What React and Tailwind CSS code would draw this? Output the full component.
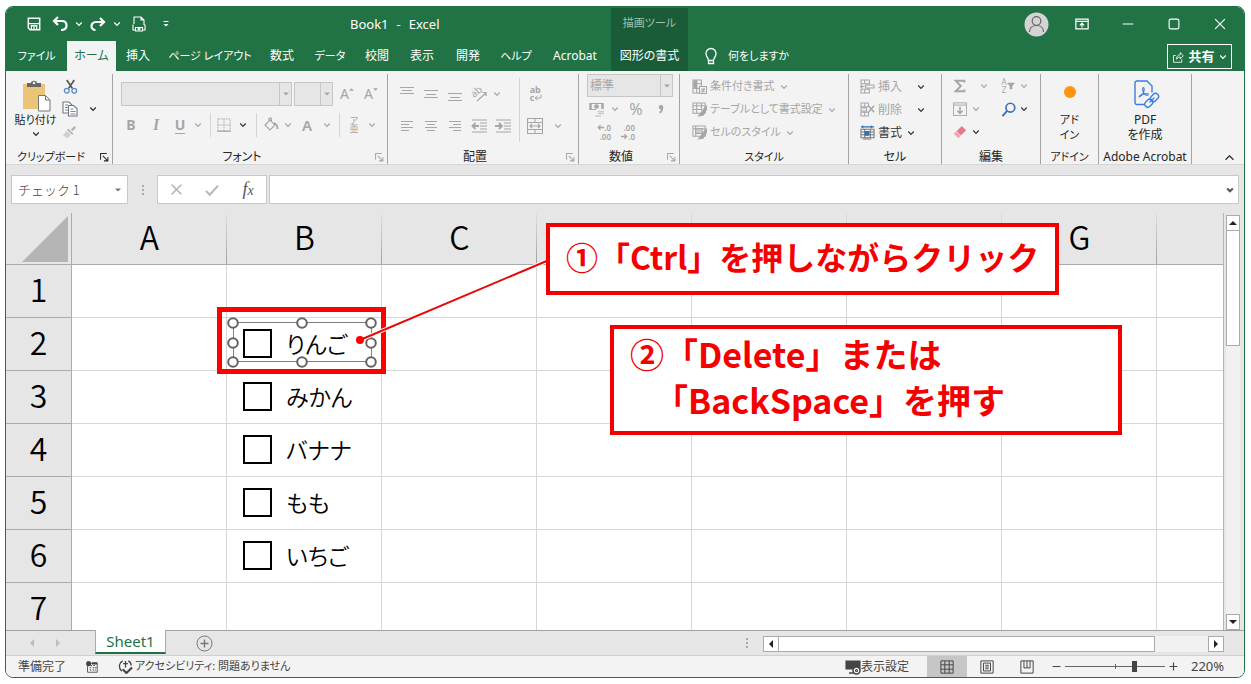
import { useState } from 'react';
import clsx from 'clsx';

const TABS = [
  { name: 'ファイル', width: 'w-[61px]', small: true },
  { name: 'ホーム', width: 'w-[49px]', active: true },
  { name: '挿入', width: 'w-11' },
  { name: 'ページ レイアウト', width: 'w-[100px]', small: true },
  { name: '数式', width: 'w-11' },
  { name: 'データ', width: 'w-[52px]', small: true },
  { name: '校閲', width: 'w-[42px]' },
  { name: '表示', width: 'w-12' },
  { name: '開発', width: 'w-11' },
  { name: 'ヘルプ', width: 'w-[52px]', small: true },
  { name: 'Acrobat', width: 'w-[66px]' },
];

// columns D-F have no title, the first callout lies over them
const COLUMNS = [
  { id: 'A', title: 'A' },
  { id: 'B', title: 'B' },
  { id: 'C', title: 'C' },
  { id: 'D' },
  { id: 'E' },
  { id: 'F' },
  { id: 'G', title: 'G' },
];
const ROWS = [1, 2, 3, 4, 5, 6, 7];
const ITEMS = { 2: 'りんご', 3: 'みかん', 4: 'バナナ', 5: 'もも', 6: 'いちご' };

export default function App() {
  return (
    <div className="h-screen bg-white py-1.5 pr-1.5 pl-[5px] font-['Noto_Sans','Noto_Sans_CJK_JP',sans-serif] text-xs text-[#262626]">
      <div className="flex h-full flex-col overflow-hidden rounded-lg border border-[#217346] bg-[#e6e6e6] [font-feature-settings:'palt']">
        <TitleBar />
        <TabBar />
        <Ribbon />
        <FormulaBar />
        <main className="flex min-h-0 flex-1">
          <Sheet />
          <VerticalScroll />
        </main>
        <SheetTabs />
        <StatusBar />
      </div>
    </div>
  );
}

function TitleBar() {
  return (
    <header className="flex h-[34px] shrink-0 bg-[#217346] text-white">
      <div className="flex w-[605px] items-center">
        <div className="flex w-[344px] items-center pl-4">
          <Btn label="上書き保存" className="w-6">
            <Icon size={14}>
              <path d="M1.5 1.5h13v13h-11l-2-2z" strokeWidth="1.7" />
              <path d="M2 7.5h12M5 14v-4h6v4M8 11v3" strokeWidth="1.5" />
            </Icon>
          </Btn>
          <Btn label="元に戻す" className="w-7">
            <Icon size={16}>
              <path d="M6 1 2 5l4 4M2.500 5H10c3 0 4.500 2 4.500 4.500S12.500 14 9 14" strokeWidth="2.200" />
            </Icon>
          </Btn>
          <Btn label="元に戻す一覧" className="w-2.5"><Chevron /></Btn>
          <Btn label="やり直し" className="w-7">
            <Icon size={16}>
              <path d="m10 2 4 4-4 4M13.500 6H6c-3 0-4.500 2-4.500 4S3 14 5.500 14" strokeWidth="2.200" />
            </Icon>
          </Btn>
          <Btn label="やり直し一覧" className="w-2.5"><Chevron /></Btn>
          <Btn label="クイック印刷" className="w-[34px]">
            <Icon size={16}>
              <path d="M3 8V1h7l3 3v5M10 1v3h3M2 8.500V14h2M14 8.500V14h-2M4.500 11.500h7v3.500h-7z" />
              <circle cx="8" cy="13" r="1" />
            </Icon>
          </Btn>
          <Btn label="クイック アクセス ツール バーのカスタマイズ" className="w-5">
            <Icon size={8}>
              <path d="M3 3h10" strokeWidth="2" />
              <path d="M3 8h10l-5 5z" fill="currentColor" stroke="none" />
            </Icon>
          </Btn>
        </div>
        <h1 className="flex gap-2 pt-0.5 text-[13px]"><span>Book1</span><span>-</span><span>Excel</span></h1>
      </div>
      <div className="mt-px w-[77px] bg-[#1b5c38] pt-2 text-center text-[11px] text-[#9fc4ae]">描画ツール</div>
      <div className="flex flex-1 items-center justify-end">
        <Btn label="アカウント" className="w-12">
          <svg width="25" height="25" viewBox="0 0 25 25" fill="none" stroke="#666" strokeWidth="1.200">
            <circle cx="12.500" cy="12.500" r="12" fill="#d4d4d4" stroke="none" />
            <circle cx="12.500" cy="9" r="4.300" />
            <path d="M5.500 20c0-4 3-6.500 7-6.500s7 2.500 7 6.500" />
          </svg>
        </Btn>
        <Btn label="リボンの表示オプション" className="w-11">
          <Icon size={14}>
            <path d="M1 2.500h14v11H1zM1 5h14M8 12V7.500M5.500 9.500 8 7l2.500 2.500" strokeWidth="1.400" />
          </Icon>
        </Btn>
        <Btn label="最小化" className="w-12"><Icon size={12}><path d="M1 8h14" strokeWidth="1.500" /></Icon></Btn>
        <Btn label="最大化" className="w-11"><Icon size={12}><rect x="1.500" y="1.500" width="13" height="13" rx="2" strokeWidth="1.500" /></Icon></Btn>
        <Btn label="閉じる" className="w-12"><Icon size={12}><path d="m1.500 1.500 13 13m0-13-13 13" strokeWidth="1.500" /></Icon></Btn>
      </div>
    </header>
  );
}

function TabBar() {
  return (
    <nav className="flex h-[30px] shrink-0 bg-[#217346] text-white">
      {TABS.map((tab) => (
        <button
          key={tab.name}
          className={clsx(
            'shrink-0 whitespace-nowrap',
            tab.width,
            tab.small && 'text-[11px]',
            tab.active && 'bg-[#f3f3f3] text-[#217346]'
          )}
        >
          {tab.name}
        </button>
      ))}
      <button className="ml-[3px] w-[77px] shrink-0 bg-[#1b5c38]">図形の書式</button>
      <button className="flex items-center gap-2 pl-3.5 text-[11px]">
        <svg width="18" height="18" viewBox="0 0 18 18" fill="none" stroke="currentColor" strokeWidth="1.300">
          <path d="M6.500 13.500c0-2.500-2.500-3.500-2.500-7a5 5 0 0 1 10 0c0 3.500-2.500 4.500-2.500 7zM6.500 13.500v3h5v-3" />
        </svg>
        何をしますか
      </button>
      <button className="mt-[3px] mr-3 ml-auto flex h-[25px] w-[65px] items-center justify-center gap-1 border border-white text-[13px] font-bold">
        <Icon size={12}>
          <path d="M5 6H2v9h11v-4M6 11c0-4 2-6 5-6V2l4 4.500-4 4V8c-2 0-4 1-5 3z" />
        </Icon>
        共有
        <Chevron />
      </button>
    </nav>
  );
}

function Ribbon() {
  return (
    <section className="flex h-[94px] shrink-0 border-b border-[#d5d5d5] bg-[#f3f3f3] pt-[3px]">
      <Group name="クリップボード" width="w-[107px]" launcher="on" small>
        <div className="flex">
          <button className="flex w-[59px] flex-col items-center pt-1.5">
            <svg width="30" height="32" viewBox="0 0 30 32" fill="none">
              <path d="M2 4h22v25H2z" fill="#ebc379" />
              <path d="M6 7V3h4c0-3 6-3 6 0h4v4z" fill="#666" />
              <circle cx="13" cy="3" r="1.300" fill="#f3f3f3" />
              <path d="M17.500 15.500h7l4.500 4.500v11H17.500z" fill="#fff" stroke="#777" />
              <path d="M24.500 15.500V20H29" stroke="#777" />
            </svg>
            <span className="text-[11px] leading-4">貼り付け</span>
            <span className="mt-0.5"><Chevron /></span>
          </button>
          <div className="-ml-1 flex flex-col">
            <Btn label="切り取り" className="h-6 w-[18px]">
              <Icon size={15}>
                <path d="m4 1 6 9M12 1 6 10" stroke="#555" strokeWidth="1.800" />
                <circle cx="4" cy="12.500" r="2.500" stroke="#5b8cc8" strokeWidth="1.400" />
                <circle cx="12" cy="12.500" r="2.500" stroke="#5b8cc8" strokeWidth="1.400" />
              </Icon>
            </Btn>
            <Btn label="コピー" className="h-[22px] w-[18px]">
              <Icon size={16}>
                <path d="M1 1h6l3 3v8H1z" stroke="#777" fill="#fff" />
                <path d="M3 4h3M3 6.500h4M3 9h4" stroke="#5b8cc8" />
                <path d="M6.500 4.500h5l3.500 3V15H6.500z" stroke="#777" fill="#fff" />
                <path d="M8.500 8h3M8.500 10.500h5M8.500 13h5" stroke="#5b8cc8" />
              </Icon>
            </Btn>
            <Btn label="書式のコピー/貼り付け" className="h-6 w-[18px] text-[#b5b5b5]">
              <Icon size={14}>
                <path d="m13 1 2 2-4 4-2-2z" fill="currentColor" stroke="none" />
                <path d="m6 4 6 6-1.500 1.500-6-6z" fill="currentColor" stroke="none" />
                <path d="m4 6.500 5 5L5 15l-5-3z" fill="#d0d0d0" stroke="none" />
              </Icon>
            </Btn>
          </div>
          <Btn label="コピーのオプション" className="mt-6 h-[22px] w-7"><Chevron /></Btn>
        </div>
      </Group>

      <Group name="フォント" width="w-[275px]" launcher="off">
        <div className="flex gap-0.5 pt-2 pl-2">
          <Drop label="フォント名" className="h-6 w-[171px]" />
          <Drop label="フォント サイズ" className="h-6 w-[39px]" />
          <Btn label="フォント サイズの拡大" className="w-6 text-[#a6a6a6]">
            <span className="text-sm">A</span><Caret up />
          </Btn>
          <Btn label="フォント サイズの縮小" className="w-5 text-[#a6a6a6]">
            <span className="text-sm">A</span><Caret />
          </Btn>
        </div>
        <div className="mt-[7px] flex h-6 pl-1.5 text-[#a6a6a6]">
          <Btn label="太字" className="w-6"><b className="text-sm">B</b></Btn>
          <Btn label="斜体" className="w-[26px]"><i className="font-['Liberation_Serif',serif] text-base font-bold">I</i></Btn>
          <Btn label="下線" className="w-[22px]"><span className="border-b border-current text-sm leading-4 font-bold">U</span></Btn>
          <Btn label="下線の種類" className="w-3.5"><Chevron /></Btn>
          <Rule className="w-2.5" />
          <Btn label="罫線" className="w-[18px]">
            <Icon size={14}><path d="M1 1h14v14H1zM8 1v14M1 8h14" strokeDasharray="2 1" stroke="#b9a9b9" /><path d="M0 15h16" stroke="#999" /></Icon>
          </Btn>
          <Btn label="罫線の種類" className="w-5 text-[#333]"><Chevron /></Btn>
          <Rule className="w-1.5" />
          <Btn label="塗りつぶしの色" className="w-6">
            <Icon size={16}><path d="m2 8 5-5 5 5-5 5zM6 5V2c0-1.500 2.500-1.500 2.500 0v3" strokeWidth="1.200" /><path d="M11 6c3 1 3.500 3 3.500 6" strokeWidth="1.800" /></Icon>
          </Btn>
          <Btn label="塗りつぶしの色の一覧" className="w-2.5"><Chevron /></Btn>
          <Btn label="フォントの色" className="w-7"><span className="text-[15px] font-semibold">A</span></Btn>
          <Btn label="フォントの色の一覧" className="w-3"><Chevron /></Btn>
          <Rule className="w-3" />
          <Btn label="ふりがなの表示" className="w-[18px] flex-col text-[9px] leading-[8px]"><span>ア</span><span>亜</span></Btn>
          <Btn label="ふりがなのオプション" className="w-[18px]"><Chevron /></Btn>
        </div>
      </Group>

      <Group name="配置" width="w-[191px]" launcher="off">
        <div className="flex text-[#a6a6a6]">
          <div className="flex w-[124px] flex-col gap-2 pt-2 pl-[7px]">
            <div className="flex h-6">
              <Btn label="上揃え" className="w-6"><Lines rows={[[1, 15, 2], [3, 13, 5], [1, 15, 8]]} /></Btn>
              <Btn label="上下中央揃え" className="w-6"><Lines rows={[[1, 15, 5], [3, 13, 9], [1, 15, 12]]} /></Btn>
              <Btn label="下揃え" className="w-6"><Lines rows={[[1, 15, 8], [3, 13, 12], [1, 15, 15]]} /></Btn>
              <Btn label="方向" className="w-6">
                <svg className="overflow-visible" width="16" height="16" viewBox="0 0 16 16" fill="none" stroke="currentColor" strokeWidth="1.200">
                  <text x="3" y="12" transform="rotate(-40 3 12)" fontSize="10" fill="currentColor" stroke="none">ab</text>
                  <path d="m6 15 9-8M11.500 6.500H15V10" />
                </svg>
              </Btn>
              <Btn label="方向のオプション" className="w-3"><Chevron /></Btn>
            </div>
            <div className="flex h-6">
              <Btn label="左揃え" className="w-6"><Lines rows={[[2, 14, 4], [2, 10, 7], [2, 14, 10], [2, 10, 13]]} /></Btn>
              <Btn label="中央揃え" className="w-6"><Lines rows={[[2, 14, 4], [4, 12, 7], [2, 14, 10], [4, 12, 13]]} /></Btn>
              <Btn label="右揃え" className="w-6"><Lines rows={[[2, 14, 4], [6, 14, 7], [2, 14, 10], [6, 14, 13]]} /></Btn>
              <Btn label="インデントを減らす" className="w-6">
                <Icon size={16}><path d="M1 2h15M9 5h7M9 8h7M9 11h7M1 14h15" /><path d="M8 8H2m2.500-3-3 3 3 3" strokeWidth="1.800" /></Icon>
              </Btn>
              <Btn label="インデントを増やす" className="w-6">
                <Icon size={16}><path d="M1 2h15M9 5h7M9 8h7M9 11h7M1 14h15" /><path d="M0 8h6M4 5l3 3-3 3" strokeWidth="1.800" /></Icon>
              </Btn>
            </div>
          </div>
          <Rule className="h-[68px] w-[15px] pt-1" />
          <div className="flex flex-col gap-2 pt-2">
            <Btn label="折り返して全体を表示する" className="h-6 w-[18px]">
              <span className="flex flex-col items-start text-[9px] leading-[8px] font-bold">
                <span>ab</span>
                <span className="flex">c<Icon size={8}><path d="M14 1v7H3m4-4L2 8l5 4" strokeWidth="2" /></Icon></span>
              </span>
            </Btn>
            <div className="flex h-6">
              <Btn label="セルを結合して中央揃え" className="w-4">
                <Icon size={16}><path d="M.5.500h15v15H.5zM.5 4.500h15M.5 11.500h15M8 .5v4M8 11.500v4M3 8h10M5 6 3 8l2 2M11 6l2 2-2 2" /></Icon>
              </Btn>
              <Btn label="結合のオプション" className="w-[30px]"><Chevron /></Btn>
            </div>
          </div>
        </div>
      </Group>

      <Group name="数値" width="w-[101px]" launcher="off">
        <div className="pl-2"><Drop label="表示形式" value="標準" className="h-[23px] w-[86px]" /></div>
        <div className="flex h-6 pl-2 text-[#a6a6a6]">
          <Btn label="通貨表示形式" className="w-5">
            <Icon size={16}><path d="M1 2.500h13M1 8.500h6" strokeWidth="1.200" /><path d="M1.500 2v7M13.500 2v6" strokeWidth="2.400" /><circle cx="7.500" cy="5.500" r="1.800" fill="currentColor" /><path d="M9 10.500h6M9 12.500h6M6 15h6" stroke="#ccc" strokeWidth="1.400" /></Icon>
          </Btn>
          <Btn label="通貨の種類" className="w-4"><Chevron /></Btn>
          <Btn label="パーセント スタイル" className="w-[26px]"><span className="text-base">%</span></Btn>
          <Btn label="桁区切りスタイル" className="w-6">
            <Icon size={10}><circle cx="8" cy="5" r="3" fill="currentColor" /><path d="M10 5c0 5-1 7-4 9" strokeWidth="3" /></Icon>
          </Btn>
        </div>
        <div className="flex h-[22px] pl-2 text-[#a6a6a6]">
          <Btn label="小数点以下の表示桁数を増やす" className="w-6 flex-col items-end text-[8px] leading-[9px] font-semibold">
            <span className="flex items-center"><Icon size={7}><path d="M16 8H3m5-5L3 8l5 5" strokeWidth="3" /></Icon>.0</span>
            <span>.00</span>
          </Btn>
          <Btn label="小数点以下の表示桁数を減らす" className="w-6 flex-col items-end text-[8px] leading-[9px] font-semibold">
            <span>.00</span>
            <span className="flex items-center"><Icon size={7}><path d="M0 8h13M8 3l5 5-5 5" strokeWidth="3" /></Icon>.0</span>
          </Btn>
        </div>
      </Group>

      <Group name="スタイル" width="w-[169px]" small>
        <div className="flex flex-col pt-px pl-3 text-[11px] text-[#a6a6a6]">
          <TextBtn text="条件付き書式">
            <path d="M1 1h9v14H1zM1 5h9M1 10h9M5 1v14" /><path d="M2 2h3v8H2z" fill="currentColor" /><path d="M8 8h7.500v7.500H8z" fill="#f3f3f3" /><path d="M9.500 11h4.500M9.500 13h4.500M13 9.500l-2 5" />
          </TextBtn>
          <TextBtn text="テーブルとして書式設定">
            <path d="M1 1h13v11H1zM1 4h13M1 8h10M5 1v11M10 1v8" /><path d="m15 4-5 7-3 4 5-1 4-7z" fill="currentColor" />
          </TextBtn>
          <TextBtn text="セルのスタイル">
            <path d="M1 1h13v11H1zM1 4h13M4 1v11" /><path d="M4 4h7v5H4z" fill="#ccc" /><path d="m15 4-5 7-3 4 5-1 4-7z" fill="currentColor" />
          </TextBtn>
        </div>
      </Group>

      <Group name="セル" width="w-[93px]">
        <div className="flex flex-col pt-px pl-[11px] text-[#a6a6a6]">
          <TextBtn text="挿入" wide>
            <path d="M1 1h9v4H1zM5 1v4M1 11h9v4H1zM5 11v4M6 6.500h9v3H6zM5 8H0m2.500-2L.5 8l2 2" />
          </TextBtn>
          <TextBtn text="削除" wide>
            <path d="M1 1h8v4H1zM5 1v4M1 6.500h6v3H1zM1 11h8v4H1zM5 11v4" /><path d="m9 4 6 7m0-7-6 7" strokeWidth="1.600" />
          </TextBtn>
          <TextBtn text="書式" dark>
            <path d="M1 4.500h14v9H1zM1 7.500h14M1 10.500h14M5 4.500v9M11 4.500v9" stroke="#777" /><path d="M5 6.500h5v5H5z" fill="#2b72b8" stroke="none" /><path d="M1 2h14M3 .5v3M12 .5v3" stroke="#2b72b8" /><path d="M3 15h9" stroke="#777" />
          </TextBtn>
        </div>
      </Group>

      <Group name="編集" width="w-[99px]">
        <div className="flex flex-col pl-2 text-[#a6a6a6]">
          <div className="flex h-6">
            <Btn label="オート SUM" className="w-5"><Icon size={14}><path d="M13 4V2H3l6 6-6 6h10v-2" strokeWidth="2.200" /></Icon></Btn>
            <Btn label="合計の種類" className="w-7"><Chevron /></Btn>
            <Btn label="並べ替えとフィルター" className="w-5">
              <span className="flex flex-col text-[8px] leading-[8px]"><span>A</span><span>Z</span></span>
              <Icon size={8}><path d="M1 2h14l-5 6v6H6V8z" fill="currentColor" /></Icon>
            </Btn>
            <Btn label="並べ替えのオプション" className="w-3"><Chevron /></Btn>
          </div>
          <div className="flex h-[22px]">
            <Btn label="フィル" className="w-5"><Icon size={14}><path d="M.5 1h15v14.500H.5zM.5 3.500h15" /><path d="M8 5.500V13M5 10l3 3 3-3" strokeWidth="1.800" /></Icon></Btn>
            <Btn label="フィルのオプション" className="w-3"><Chevron /></Btn>
            <Btn label="検索と選択" className="ml-4 w-5"><Icon size={15}><circle cx="10" cy="6" r="4.700" stroke="#3b72b5" strokeWidth="1.800" /><path d="m6.500 9.500-5 5.500" stroke="#3b72b5" strokeWidth="2" /></Icon></Btn>
            <Btn label="検索のオプション" className="w-3 text-[#333]"><Chevron /></Btn>
          </div>
          <div className="flex h-6">
            <Btn label="クリア" className="w-5"><Icon size={14}><path d="m10 1 5 5-6 6-5-5z" fill="#e9798a" stroke="none" /><path d="m3.500 7.500 5 5L6 15l-5-5z" fill="#f1a3ae" stroke="none" /></Icon></Btn>
            <Btn label="クリアのオプション" className="w-3 text-[#333]"><Chevron /></Btn>
          </div>
        </div>
      </Group>

      <Group name="アドイン" width="w-[58px]" small>
        <button className="flex w-full flex-col items-center pt-3 text-[11px] leading-[15px]">
          <span className="mb-3.5 size-3 rounded-full bg-[#ff9312]" />
          <span>アド</span>
          <span>イン</span>
        </button>
      </Group>

      <Group name="Adobe Acrobat" width="w-[93px]">
        <button className="flex w-full flex-col items-center pt-1.5 leading-[15px]">
          <svg className="mb-[3px] ml-1" width="26" height="29" viewBox="0 0 26 29" fill="none" stroke="#3b7de0" strokeWidth="1.400" strokeLinecap="round">
            <path d="M10 24.500H3a2 2 0 0 1-2-2V3a2 2 0 0 1 2-2h10l5 5v6" />
            <path d="M5 17c4-2 6-6 5-9-1-1-2 0-1 3 1 3 3 5 5 4 1-1-1-2-3-1-3 0-5 1-6 3" strokeWidth="1.100" />
            <g transform="rotate(-45 18 20)">
              <rect x="9" y="17" width="9" height="6" rx="3" />
              <rect x="17" y="17" width="9" height="6" rx="3" />
              <path d="M15 20h6" />
            </g>
          </svg>
          <span>PDF</span>
          <span>を作成</span>
        </button>
      </Group>

      <button aria-label="リボンを折りたたむ" className="mr-2.5 mb-0.5 ml-auto self-end">
        <Icon size={9}><path d="m1 12 7-7 7 7" strokeWidth="2.200" /></Icon>
      </button>
    </section>
  );
}

function FormulaBar() {
  return (
    <section className="flex h-12 shrink-0 items-start pt-[10px] pr-[5px] pl-[5px]">
      <div className="flex h-[29px] w-[117px] items-center border border-[#c8c8c8] bg-white pr-1.5 text-[#777]">
        <input
          aria-label="名前ボックス"
          defaultValue="チェック 1"
          className="w-full min-w-0 flex-1 pl-1.5 font-['Noto_Sans_CJK_JP',sans-serif] text-[13px] font-light text-[#444] outline-none [font-feature-settings:normal]"
        />
        <Triangle small />
      </div>
      <Dots className="h-[29px] w-[29px]" />
      <div className="flex h-[29px] w-[110px] items-center justify-around border border-[#c8c8c8] bg-white text-[#b8b8b8]">
        <Btn label="キャンセル" className="w-6"><Icon size={13}><path d="m2 2 12 12m0-12L2 14" strokeWidth="1.800" /></Icon></Btn>
        <Btn label="入力" className="w-6"><Icon size={14}><path d="m1 9 4.500 4.500L15 3" strokeWidth="2.400" /></Icon></Btn>
        <Btn label="関数の挿入" className="w-6 text-[#555]">
          <i className="font-['Liberation_Serif',serif] text-lg leading-5">f<span className="text-sm">x</span></i>
        </Btn>
      </div>
      <div className="ml-[2px] flex h-[29px] min-w-0 flex-1 items-center border border-[#c8c8c8] bg-white pr-1">
        <input aria-label="数式バー" className="h-full min-w-0 flex-1 px-2 outline-none" />
        <span className="text-[#555]"><Chevron bold /></span>
      </div>
    </section>
  );
}

function Sheet() {
  const [checked, setChecked] = useState({});

  return (
    <div className="relative min-w-0 flex-1 overflow-hidden">
      <div className="h-full overflow-hidden border-r border-[#b5b5b5]">
        <table className="w-full table-fixed border-separate border-spacing-0 font-['Noto_Sans_CJK_JP',sans-serif] text-[32px] leading-10 text-black [font-feature-settings:normal]">
          <colgroup>
            <col className="w-[66px]" />
            {COLUMNS.map((col) => <col key={col.id} className="w-[155px]" />)}
            <col />
          </colgroup>
          <thead>
            <tr className="h-[52px] bg-[#e6e6e6]">
              <td className="border-r border-b border-[#ababab] p-0 pr-[3px] pb-0.5 align-bottom">
                <svg className="ml-auto block" width="46" height="46" viewBox="0 0 46 46"><path d="M46 0v46H0z" fill="#b4b4b4" /></svg>
              </td>
              {COLUMNS.map((col) => (
                <th
                  key={col.id}
                  scope="col"
                  className="border-b border-[#ababab] bg-[linear-gradient(#e0e0e0,#9f9f9f)] bg-[length:1px_100%] bg-right bg-no-repeat p-0 pb-1.5 font-[350]"
                >
                  {col.title}
                </th>
              ))}
              <td className="border-b border-[#ababab]" />
            </tr>
          </thead>
          <tbody>
            {ROWS.map((row) => (
              <tr key={row} className="h-[53px] bg-white">
                <th scope="row" className="border-r border-b border-[#ababab] bg-[#e6e6e6] p-0 pb-1.5 font-[350]">{row}</th>
                {COLUMNS.map((col) => (
                  <td key={col.id} className="border-r border-b border-[#d6d6d6] p-0 pb-0.5">
                    {col.id === 'B' && ITEMS[row] && (
                      <label className="flex items-center gap-3.5 pl-4 text-[23px] leading-8 font-[350] [font-feature-settings:'palt']">
                        <input
                          type="checkbox"
                          checked={!!checked[row]}
                          onChange={(e) => setChecked({ ...checked, [row]: e.target.checked })}
                          className="size-[29px] appearance-none border-2 border-black bg-white checked:bg-gray-400"
                        />
                        {ITEMS[row]}
                      </label>
                    )}
                  </td>
                ))}
                <td className="border-b border-[#d6d6d6]" />
              </tr>
            ))}
          </tbody>
        </table>
      </div>

      <SelectedShape />
      <Callout className="top-2.5 left-[540px] h-[72px] w-[513px] pt-1.5 text-[32px]">①「Ctrl」を押しながらクリック</Callout>
      <Callout className="top-28 left-[604px] h-[110px] w-[512px] pt-0.5 text-[34px]">
        ②「Delete」または
        <br />
        <span className="pl-6">「BackSpace」を押す</span>
      </Callout>
    </div>
  );
}

// selection handles around the first checkbox, its red frame and the leader line
function SelectedShape() {
  const xs = [227, 296, 365];
  const ys = [110, 130, 149];

  return (
    <svg className="pointer-events-none absolute top-0 left-0" width="560" height="180" viewBox="0 0 560 180" fill="none">
      <rect x="213.500" y="96.500" width="164" height="62" stroke="#f00" strokeWidth="5" />
      <rect x="227.500" y="109.500" width="138" height="39" stroke="#7f7f7f" />
      {ys.map((y) => xs.map((x) => (
        !(x === 296 && y === 130) && (
          <circle key={`${x}-${y}`} cx={x} cy={y} r="4.800" fill="#fff" stroke="#636363" strokeWidth="2" />
        )
      )))}
      <path d="M354 127 543 47" stroke="#fff" strokeWidth="4" />
      <path d="M354 127 543 47" stroke="#e80808" strokeWidth="2" />
      <circle cx="354" cy="127" r="4" fill="#f00" />
    </svg>
  );
}

function Callout({ className, children }) {
  return (
    <p
      className={clsx(
        "absolute border-4 border-[#f20000] bg-white pl-4 font-['Noto_Sans_CJK_JP',sans-serif] leading-[46px] font-bold whitespace-nowrap text-[#f50000] [font-feature-settings:normal]",
        className
      )}
    >
      {children}
    </p>
  );
}

function VerticalScroll() {
  return (
    <div className="flex w-5 shrink-0 flex-col pt-[2px] pr-1 pl-0.5">
      <button aria-label="上へスクロール" className="flex h-4 w-full shrink-0 items-center justify-center border border-[#ababab] bg-white text-[#222]">
        <Triangle className="rotate-180" />
      </button>
      <div className="flex-1 bg-[#f1f1f1]"><div className="-mt-px h-[116px] border border-[#ababab] bg-white" /></div>
      <button aria-label="下へスクロール" className="flex h-4 w-full shrink-0 items-center justify-center border border-[#ababab] bg-white text-[#222]">
        <Triangle />
      </button>
    </div>
  );
}

function SheetTabs() {
  return (
    <section className="flex h-[26px] shrink-0 border-t border-b border-t-[#a0a0a0] border-b-[#d0d0d0]">
      <div className="flex w-[89px] items-center gap-3.5 pl-5 text-[#bdbdbd]">
        <Btn label="前のシート" className="w-3"><Triangle className="rotate-90" /></Btn>
        <Btn label="次のシート" className="w-3"><Triangle className="-rotate-90" /></Btn>
      </div>
      <button className="-mt-px h-[24px] w-[71px] border-x border-b-2 border-x-[#ababab] border-b-[#217346] bg-white text-[15px] leading-5 text-[#217346]">
        Sheet1
      </button>
      <button aria-label="新しいシート" className="ml-[30px] text-[#777]">
        <svg width="17" height="17" viewBox="0 0 17 17" fill="none" stroke="currentColor"><circle cx="8.500" cy="8.500" r="7.500" /><path d="M8.500 4.500v8M4.500 8.500h8" strokeWidth="1.400" /></svg>
      </button>
      <Dots className="ml-auto h-full w-8" />
      <div className="mt-[5px] mr-5 flex h-4 w-[461px] bg-[#f1f1f1] text-[#222]">
        <button aria-label="左へスクロール" className="flex w-4 items-center justify-center border border-[#ababab] bg-white"><Triangle className="rotate-90" /></button>
        <div className="-ml-px w-[377px] border border-[#ababab] bg-white" />
        <button aria-label="右へスクロール" className="ml-auto flex w-4 items-center justify-center border border-[#ababab] bg-white"><Triangle className="-rotate-90" /></button>
      </div>
    </section>
  );
}

function StatusBar() {
  return (
    <footer className="flex h-[21px] shrink-0 items-center bg-[#f3f3f3] text-[#444]">
      <span className="w-20 pl-3">準備完了</span>
      <Btn label="マクロの記録" className="w-3">
        <Icon size={12}><path d="M3 3h12v12H2V6" /><path d="M6 6h2M10 6h2M5 9h2M9 9h2M5 12h2M9 12h2M12 9h2M12 12h1" strokeWidth="1.600" /><circle cx="3.500" cy="3.500" r="3" fill="currentColor" /><path d="M8 3h7" strokeWidth="3" /></Icon>
      </Btn>
      <button className="ml-5 flex items-center gap-0.5 text-[11px]">
        <Icon size={15}><path d="M5 2C1 4 0 9 4 13M11 2c2 1 3 3 3 5M8 2v7M5.500 5h5" strokeWidth="1.400" /><path d="m5 11 4 4 6-6" strokeWidth="2.200" /></Icon>
        アクセシビリティ: 問題ありません
      </button>
      <button className="mr-[18px] ml-auto flex items-center">
        <Icon size={16}><path d="M1 2h14v8H1z" fill="currentColor" /><path d="M4 14h5" strokeWidth="1.500" /><circle cx="11.500" cy="11.500" r="3.500" fill="#f3f3f3" strokeWidth="1.500" /><circle cx="11.500" cy="11.500" r="1" /></Icon>
        表示設定
      </button>
      <Btn label="標準" className="h-full w-10 bg-[#c6c6c6]"><Icon size={14}><path d="M1 1h14v14H1zM1 5.500h14M1 10.500h14M5.500 1v14M10.500 1v14" /></Icon></Btn>
      <Btn label="ページ レイアウト表示" className="h-full w-10"><Icon size={14}><path d="M1 1h14v14H1zM4 3.500h8v9H4zM6 6h4M6 8h4M6 10h4" /></Icon></Btn>
      <Btn label="改ページ プレビュー" className="h-full w-10"><Icon size={14}><path d="M1 1h14v14H1zM4.500 1v8h7V1M8 1v8" /></Icon></Btn>
      <Btn label="縮小" className="w-[18px]"><Icon size={9}><path d="M1 8h14" strokeWidth="2" /></Icon></Btn>
      <input
        type="range"
        aria-label="ズーム"
        defaultValue="70"
        className="h-3 w-[100px] appearance-none bg-[linear-gradient(#666,#666),linear-gradient(#666,#666)] bg-[length:100%_1px,1px_5px] bg-center bg-no-repeat [&::-webkit-slider-thumb]:h-[11px] [&::-webkit-slider-thumb]:w-[5px] [&::-webkit-slider-thumb]:appearance-none [&::-webkit-slider-thumb]:bg-[#444]"
      />
      <Btn label="拡大" className="w-4"><Icon size={9}><path d="M1 8h14M8 1v14" strokeWidth="2" /></Icon></Btn>
      <span className="w-[63px] pl-2.5 text-[13px]">220%</span>
    </footer>
  );
}

function Group({ name, width, launcher, small, children }) {
  return (
    <div className={clsx('flex shrink-0 flex-col border-r border-[#a3a3a3]', width)}>
      <div className="flex-1">{children}</div>
      <div className="flex h-3.5 items-center leading-3.5 whitespace-nowrap">
        <span className={clsx('flex-1 text-center', small && 'text-[11px]')}>{name}</span>
        {launcher && (
          <Btn label={`${name}の設定`} className={clsx('w-4', launcher === 'off' && 'text-[#a6a6a6]')}>
            <Icon size={9}><path d="M1 12V1h11M5 5l8 8M14 7v7H7" strokeWidth="1.800" /></Icon>
          </Btn>
        )}
      </div>
    </div>
  );
}

function Btn({ label, className, children }) {
  return (
    <button aria-label={label} className={clsx('flex shrink-0 items-center justify-center', className)}>
      {children}
    </button>
  );
}

function TextBtn({ text, wide, dark, children }) {
  return (
    <button className={clsx('flex h-[23px] items-center gap-[3px] whitespace-nowrap', dark && 'text-[#333]')}>
      <Icon size={15}>{children}</Icon>
      {text}
      <span className={clsx(wide ? 'ml-3 text-[#333]' : 'ml-0.5')}><Chevron /></span>
    </button>
  );
}

function Drop({ label, value = '', className }) {
  return (
    <div className={clsx('flex border border-[#c6c6c6] bg-[#e6e6e6] text-[#a6a6a6]', className)}>
      <select aria-label={label} disabled defaultValue={value} className="min-w-0 flex-1 appearance-none pl-0.5">
        <option value={value}>{value}</option>
      </select>
      <span className="flex w-3 shrink-0 items-center justify-center border-l border-[#c6c6c6]"><Triangle small /></span>
    </div>
  );
}

function Rule({ className }) {
  return <div className={clsx('flex shrink-0 justify-center', className)}><div className="h-full w-px bg-[#d5d5d5]" /></div>;
}

function Dots({ className }) {
  return (
    <div className={clsx('flex flex-col items-center justify-center gap-0.5', className)}>
      <span className="size-0.5 bg-[#aaa]" />
      <span className="size-0.5 bg-[#aaa]" />
      <span className="size-0.5 bg-[#aaa]" />
    </div>
  );
}

function Icon({ size, children }) {
  return (
    <svg className="shrink-0" width={size} height={size} viewBox="0 0 16 16" fill="none" stroke="currentColor" strokeWidth="1.100">
      {children}
    </svg>
  );
}

function Lines({ rows }) {
  return (
    <Icon size={16}>
      {rows.map(([x1, x2, y]) => <path key={y} d={`M${x1} ${y - 0.5}H${x2}`} />)}
    </Icon>
  );
}

function Chevron({ bold }) {
  return (
    <svg width="8" height="8" viewBox="0 0 8 8" fill="none" stroke="currentColor" strokeWidth={bold ? 2 : 1.2}>
      <path d="M1.200 2.500 4 5.300l2.800-2.800" />
    </svg>
  );
}

function Triangle({ small, className }) {
  return (
    <svg className={className} width={small ? 6 : 8} height={small ? 6 : 8} viewBox="0 0 8 8">
      <path d="M0 2h8L4 6z" fill="currentColor" />
    </svg>
  );
}

function Caret({ up }) {
  return (
    <svg className="-mt-2.5" width="5" height="5" viewBox="0 0 8 8">
      <path d={up ? 'M0 6h8L4 2z' : 'M0 2h8L4 6z'} fill="currentColor" />
    </svg>
  );
}
